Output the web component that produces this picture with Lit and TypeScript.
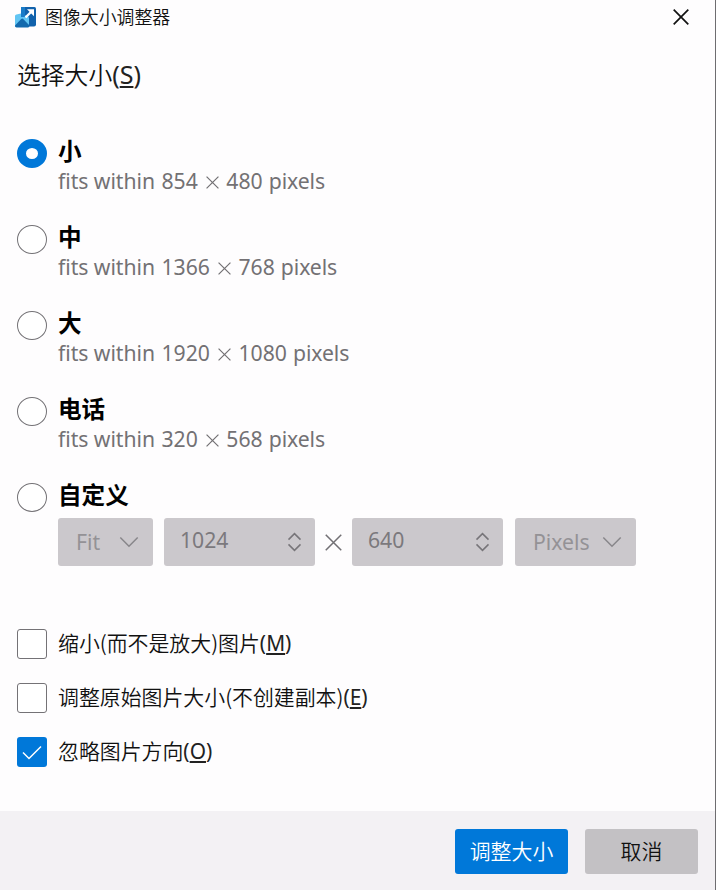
import { LitElement, html, css, svg, nothing } from "lit";
import { customElement, property, state } from "lit/decorators.js";

interface SizePreset {
  name: string;
  width?: number;
  height?: number;
}

const PRESETS: SizePreset[] = [
  { name: "小", width: 854, height: 480 },
  { name: "中", width: 1366, height: 768 },
  { name: "大", width: 1920, height: 1080 },
  { name: "电话", width: 320, height: 568 },
  { name: "自定义" },
];

const OPTIONS = [
  { text: "缩小(而不是放大)图片", key: "M" },
  { text: "调整原始图片大小(不创建副本)", key: "E" },
  { text: "忽略图片方向", key: "O" },
];

const cross = (size: number, width: number) => html`<svg class="cross" width=${size} height=${size} viewBox="0 0 16 16">
  <path d="M.7.7l14.6 14.6M15.3.7L.7 15.3" fill="none" stroke="currentColor" stroke-width=${width} />
</svg>`;

@customElement("size-field")
class SizeField extends LitElement {
  @property() value = "";
  @property() kind: "select" | "number" = "select";

  static styles = css`
    :host { display: block; height: 48px; }
    .box {
      height: 48px; box-sizing: border-box; border-radius: 3px; background: #cbc8cc;
      display: flex; align-items: center; justify-content: space-between;
      font: 21.2px/28px "Noto Sans", sans-serif;
    }
    .select { color: #949296; padding: 0 14px 0 18px; }
    .number { color: #7b797d; padding: 0 13px 0 16px; }
    .number .value { margin-top: -4px; }
    svg { display: block; fill: none; stroke: #88868a; stroke-width: 1.5; }
    .number svg { stroke: #777579; }
  `;

  render() {
    const icon = this.kind === "select"
      ? html`<svg width="20" height="12" viewBox="0 0 20 12">${svg`<path d="M1.3 1.5L10 10.2 18.7 1.5"/>`}</svg>`
      : html`<svg width="15" height="20" viewBox="0 0 15 20">${svg`<path d="M1.5 7.6L7.5 1.6l6 6M1.5 12.4l6 6 6-6"/>`}</svg>`;
    return html`<div class="box ${this.kind}"><span class="value">${this.value}</span>${icon}</div>`;
  }
}

@customElement("app-root")
class AppRoot extends LitElement {
  @state() selected = 0;
  @state() checked = [false, false, true];

  static styles = css`
    :host {
      display: flex; flex-direction: column; box-sizing: border-box;
      width: 716px; height: 890px; overflow: hidden;
      background: #fefdfe; color: #111; border-right: 1px solid #6e6d70;
      font-family: "Noto Sans", "Noto Sans CJK SC", sans-serif;
    }
    header { display: flex; align-items: center; height: 34px; padding: 0 26px 0 15px; flex: none; }
    .logo { display: block; margin-right: 8px; }
    .title { font: 350 17.9px/34px "Noto Sans CJK SC", sans-serif; flex: 1; margin-top: -3px; }
    .cross { display: block; }
    h1 { margin: 21px 0 0 17px; font-size: 23.8px; line-height: 38px; font-weight: 350; height: 38px; flex: none; }
    h1 .latin { font-size: 25px; }
    .cjk { font-family: "Noto Sans CJK SC", sans-serif; font-weight: 350; }
    .latin { font-family: "Noto Sans", sans-serif; font-weight: 400; color: #222; }
    u { text-decoration-thickness: 1.5px; text-underline-offset: 2px; }
    .presets { margin-top: 39px; padding-left: 17px; flex: none; }
    .preset { display: grid; grid-template-columns: 30px 1fr; column-gap: 11px; height: 86px; }
    .radio {
      width: 30px; height: 29px; box-sizing: border-box; margin-top: 7px;
      border: 1.5px solid #747276; border-radius: 50%; background: #fff;
    }
    .radio.on { border: 9px solid #0078d9; padding: 0; }
    .name { font: 700 23.6px/34px "Noto Sans CJK SC", sans-serif; color: #000; height: 34px; margin-top: 1px; }
    .detail { display: flex; font-size: 21.2px; line-height: 28px; height: 28px; color: #737174; white-space: pre; }
    .lead { width: 103.5px; letter-spacing: -0.05px; }
    .times { width: 28.5px; display: flex; align-items: center; justify-content: center; padding-top: 2px; box-sizing: border-box; }
    .unit { margin-left: 6px; letter-spacing: -0.1px; }
    .fields { display: flex; height: 48px; margin-top: 6.500px; align-items: center; color: #727074; }
    .mode { width: 95px; margin-right: 11px; }
    .measure { width: 151px; }
    .by { width: 37px; display: flex; justify-content: center; padding-top: 2px; }
    .units { width: 121px; margin-left: 12px; }
    .options { padding: 67px 0 0 17px; flex: none; }
    .option { display: flex; height: 54px; align-items: flex-start; font-size: 20.9px; line-height: 30px; white-space: nowrap; }
    .check {
      width: 30px; height: 30px; box-sizing: border-box; margin-right: 11px; flex: none;
      border: 1.5px solid #747276; border-radius: 3px; background: #fff;
    }
    .check.on { background: #0078d9; border: 0; }
    .check svg { display: block; }
    .label { height: 30px; margin-top: -2px; }
    footer {
      margin-top: auto; height: 79px; background: #f3f1f4; flex: none; box-sizing: border-box;
      padding: 18px 17px 0 0; display: flex; justify-content: flex-end; gap: 17px;
    }
    button {
      border: 0; border-radius: 3px; width: 113px; height: 45px; padding: 0 0 2px;
      font: 350 20.9px/43px "Noto Sans CJK SC", sans-serif; background: #c3c1c4; color: #111;
    }
    button.primary { background: #0078d9; color: #fff; }
  `;

  private toggle(i: number) {
    this.checked = this.checked.map((v, n) => (n === i ? !v : v));
  }

  private detail(p: SizePreset) {
    return html`<div class="detail"><span class="lead">fits within</span><span>${p.width}</span><span class="times">${cross(13, 1.5)}</span><span>${p.height}</span><span class="unit">pixels</span></div>`;
  }

  private custom() {
    return html`<div class="fields">
      <size-field class="mode" value="Fit"></size-field>
      <size-field class="measure" kind="number" value="1024"></size-field>
      <span class="by">${cross(17, 1.4)}</span>
      <size-field class="measure" kind="number" value="640"></size-field>
      <size-field class="units" value="Pixels"></size-field>
    </div>`;
  }

  render() {
    return html`
      <header>
        <svg class="logo" width="22" height="21" viewBox="0 0 22 21">
          <path d="M6 0h13.500Q21 0 21 1.500V17.500q0 2-2 2H6z" fill="#1262ac" />
          <path d="M0 9q0-1.500 1.500-1.500L6 6.500 12 9q2 .5 2 2v9H0z" fill="#62c5f3" />
          <path d="M6 0h4v10H6z" fill="#1a7cc8" />
          <path d="M0 18.500l6.200-6.500q1-.8 2 0l6.300 6.500q0 2-1.500 2H1.500Q0 20.500 0 18.500z" fill="#1269ad" />
          <path d="M10.500 10.500l6-6" fill="none" stroke="#fff" stroke-width="2.400" />
          <path d="M12 2.300h7v7z" fill="#fff" />
        </svg>
        <span class="title">图像大小调整器</span>
        ${cross(16, 1.7)}
      </header>
      <h1><span class="cjk">选择大小</span><span class="latin">(<u>S</u>)</span></h1>
      <div class="presets">
        ${PRESETS.map((p, i) => html`<div class="preset" @click=${() => (this.selected = i)}>
          <div class="radio ${this.selected === i ? "on" : ""}"></div>
          <div><div class="name">${p.name}</div>${p.width ? this.detail(p) : this.custom()}</div>
        </div>`)}
      </div>
      <div class="options">
        ${OPTIONS.map((o, i) => html`<div class="option" @click=${() => this.toggle(i)}>
          <div class="check ${this.checked[i] ? "on" : ""}">${this.checked[i]
            ? html`<svg width="30" height="30" viewBox="0 0 30 30"><path d="M6 15.500l6 6L24 9.500" fill="none" stroke="#fff" stroke-width="1.500" /></svg>`
            : nothing}</div>
          <div class="label"><span class="cjk">${o.text}</span><span class="latin">(<u>${o.key}</u>)</span></div>
        </div>`)}
      </div>
      <footer><button class="primary">调整大小</button><button>取消</button></footer>
    `;
  }
}
